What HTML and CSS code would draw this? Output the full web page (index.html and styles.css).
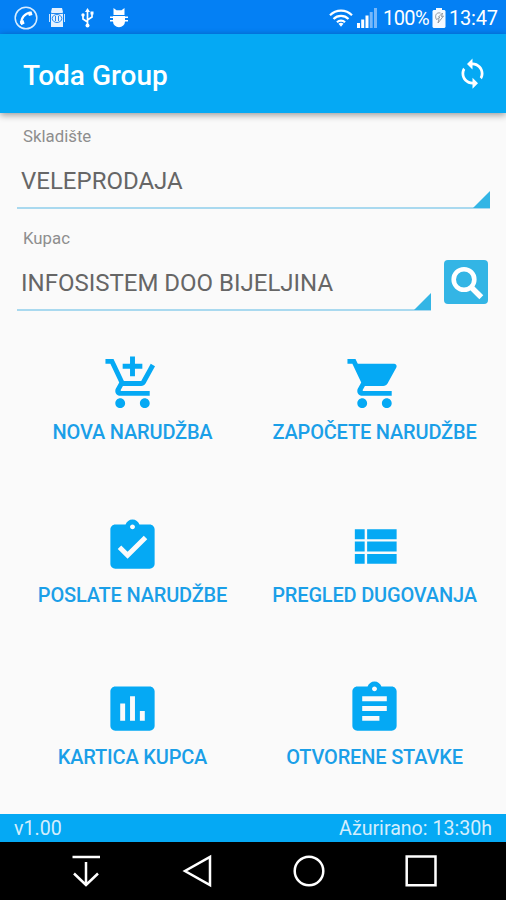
FILE: index.html
```html
<!DOCTYPE html>
<html lang="bs">
<head>
    <meta charset="UTF-8">
    <meta name="viewport" content="width=device-width, initial-scale=1.0">
    <title>Toda Group</title>
    <link rel="stylesheet" href="styles.css">
</head>
<body>

    <!-- Status bar -->
    <div class="status-bar">
        <div class="status-left">
            <svg class="icon-call" width="24" height="24" viewBox="0 0 24 24">
                <circle cx="12" cy="12" r="10.8" fill="none" stroke="#d8ecff" stroke-width="1.5"/>
                <path d="M7.5 17.8C6.5 12 11 7.2 16.6 6.6" fill="none" stroke="#fff" stroke-width="2.2"/>
                <path d="M13.6 6l4-.6.9 3.7-3.6 1zM5.8 15.6l3.6-1.6 1.2 3.4-3.3 1.8z" fill="#fff"/>
            </svg>
            <svg class="icon-jar" width="16" height="22" viewBox="0 0 16 22">
                <path d="M3 1h10l1 4-1 2H3L2 5zM2 7h12v13H2z" fill="#e3f1ff"/>
                <path d="M.5 7v8M15.500 7v8" stroke="#cfe6ff" stroke-width="1"/>
                <ellipse cx="8" cy="11.500" rx="4.800" ry="4" fill="none" stroke="#2488ee" stroke-width="1"/>
                <path d="M6.500 9v5M9.500 9v5M3 6.500h10" stroke="#2488ee" stroke-width="1"/>
            </svg>
            <svg class="icon-usb" width="13" height="20" viewBox="0 0 13 20">
                <path d="M6.500 3v14M6.500 14L2 11V7.500M6.500 12L11 9V6" fill="none" stroke="#fff" stroke-width="1.700"/>
                <path d="M6.500 0l2.500 4H4zM9.500 3.500h3v3h-3z" fill="#fff"/>
                <circle cx="2" cy="7" r="1.700" fill="#fff"/>
                <circle cx="6.500" cy="17.500" r="2" fill="#fff"/>
            </svg>
            <svg class="icon-debug" width="18" height="20" viewBox="0 0 18 20">
                <path d="M3.500 7V0l3 2.200h5l3-2.200v7zM3 8h12v5.500a6 5.800 0 0 1-12 0z" fill="#fff"/>
                <path d="M0 9.200h18M0 12.800h18" stroke="#fff" stroke-width="1.400"/>
            </svg>
        </div>
        <div class="status-right">
            <svg class="icon-wifi" width="24" height="18" viewBox="0 0 24 18">
                <path d="M1 6.300a15.500 15.500 0 0 1 22 0M4.500 10a10.500 10.500 0 0 1 15 0M8 13.300a5.600 5.600 0 0 1 8 0" fill="none" stroke="#fff" stroke-width="2.200"/>
                <path d="M9.500 14.800a3.700 3.700 0 0 1 5 0L12 17.800z" fill="#fff"/>
            </svg>
            <svg class="icon-signal" width="20" height="20" viewBox="0 0 20 20">
                <path d="M0 15h3v5H0zM4.200 11.500h3V20h-3zM8.500 7.500h3V20h-3z" fill="#fff"/>
                <path d="M12.700 4h3v16h-3zM17 0h3v20h-3z" fill="#76b7fa"/>
            </svg>
            <span class="battery-text">100%</span>
            <svg class="icon-battery" width="14" height="20" viewBox="0 0 14 20">
                <path d="M4 0h6v2h2.500l1 1v16l-1 1h-11l-1-1V3l1-1H4z" fill="#f5faff"/>
                <path d="M8.500 5C4 4 2.500 8 4.500 11.500L8 9.500 6.500 9l4-4-1 3.500 2-.5-5.500 7 1-4" fill="none" stroke="#8a9096" stroke-width=".9"/>
            </svg>
            <span class="clock">13:47</span>
        </div>
    </div>

    <!-- App bar -->
    <header class="app-bar">
        <h1>Toda Group</h1>
        <svg class="icon-sync" width="33" height="33" viewBox="0 0 24 24" fill="#fff">
            <path d="M12 4V1L8 5l4 4V6c3.310 0 6 2.690 6 6 0 1.010-.25 1.970-.7 2.800l1.460 1.460C19.540 15.030 20 13.570 20 12c0-4.420-3.580-8-8-8zm0 14c-3.310 0-6-2.690-6-6 0-1.010.25-1.970.7-2.800L5.240 7.740C4.460 8.970 4 10.430 4 12c0 4.420 3.580 8 8 8v3l4-4-4-4v3z"/>
        </svg>
    </header>

    <main>
        <div class="form">
            <label class="field-label">Skladište</label>
            <div class="spinner">
                <span class="spinner-text">VELEPRODAJA</span>
                <span class="spinner-arrow"></span>
            </div>

            <label class="field-label">Kupac</label>
            <div class="customer-row">
                <div class="spinner">
                    <span class="spinner-text">INFOSISTEM DOO BIJELJINA</span>
                    <span class="spinner-arrow"></span>
                </div>
                <button class="search-btn" aria-label="Traži">
                    <svg width="44" height="44" viewBox="0 0 44 44" fill="none" stroke="#fff">
                        <circle cx="20" cy="19.500" r="10.300" stroke-width="4.600"/>
                        <path d="M27.500 27.500L37.300 37.300" stroke-width="5.500"/>
                    </svg>
                </button>
            </div>
        </div>

        <!-- Main menu -->
        <div class="menu">
            <div class="menu-item">
                <svg class="menu-icon" viewBox="0 0 24 24">
                    <path d="M11 9h2V6h3V4h-3V1h-2v3H8v2h3v3zm-4 9c-1.100 0-1.990.9-1.990 2S5.900 22 7 22s2-.9 2-2-.9-2-2-2zm10 0c-1.100 0-1.990.9-1.990 2s.89 2 1.990 2 2-.9 2-2-.9-2-2-2zm-9.830-3.250l.03-.12.900-1.630h7.450c.75 0 1.410-.41 1.750-1.030l3.860-7.010L19.420 4h-.01l-1.100 2-2.760 5H8.530l-.13-.27L6.160 6l-.95-2-.94-2H1v2h2l3.600 7.590-1.350 2.450c-.16.280-.25.610-.25.960 0 1.100.9 2 2 2h12v-2H7.420c-.13 0-.25-.11-.25-.25z"/>
                </svg>
                <span class="menu-text">NOVA NARUDŽBA</span>
            </div>
            <div class="menu-item">
                <svg class="menu-icon" viewBox="0 0 24 24">
                    <path d="M7 18c-1.100 0-1.990.9-1.990 2S5.900 22 7 22s2-.9 2-2-.9-2-2-2zM1 2v2h2l3.600 7.590-1.350 2.450c-.16.280-.25.610-.25.960 0 1.100.9 2 2 2h12v-2H7.420c-.14 0-.25-.11-.25-.25l.03-.12.900-1.630h7.450c.75 0 1.410-.41 1.750-1.030l3.580-6.490c.08-.14.120-.31.120-.48 0-.55-.45-1-1-1H5.210l-.94-2H1zm16 16c-1.100 0-1.990.9-1.990 2s.89 2 1.990 2 2-.9 2-2-.9-2-2-2z"/>
                </svg>
                <span class="menu-text">ZAPOČETE NARUDŽBE</span>
            </div>
            <div class="menu-item">
                <svg class="menu-icon" viewBox="0 0 24 24">
                    <path d="M19 3h-4.180C14.400 1.840 13.300 1 12 1c-1.300 0-2.400.84-2.820 2H5c-1.100 0-2 .9-2 2v14c0 1.100.9 2 2 2h14c1.100 0 2-.9 2-2V5c0-1.100-.9-2-2-2zm-7 0c.55 0 1 .45 1 1s-.45 1-1 1-1-.45-1-1 .45-1 1-1zm-2 14l-4-4 1.410-1.410L10 14.170l6.590-6.590L18 9l-8 8z"/>
                </svg>
                <span class="menu-text">POSLATE NARUDŽBE</span>
            </div>
            <div class="menu-item">
                <svg class="menu-icon" viewBox="0 0 24 24">
                    <path d="M4 14h4v-4H4v4zm0 5h4v-4H4v4zM4 9h4V5H4v4zm5 5h12v-4H9v4zm0 5h12v-4H9v4zM9 5v4h12V5H9z"/>
                </svg>
                <span class="menu-text">PREGLED DUGOVANJA</span>
            </div>
            <div class="menu-item">
                <svg class="menu-icon" viewBox="0 0 24 24">
                    <path d="M19 3H5c-1.100 0-2 .9-2 2v14c0 1.100.9 2 2 2h14c1.100 0 2-.9 2-2V5c0-1.100-.9-2-2-2zM9 17H7v-7h2v7zm4 0h-2V7h2v10zm4 0h-2v-4h2v4z"/>
                </svg>
                <span class="menu-text">KARTICA KUPCA</span>
            </div>
            <div class="menu-item">
                <svg class="menu-icon" viewBox="0 0 24 24">
                    <path d="M19 3h-4.180C14.400 1.840 13.300 1 12 1c-1.300 0-2.400.84-2.820 2H5c-1.100 0-2 .9-2 2v14c0 1.100.9 2 2 2h14c1.100 0 2-.9 2-2V5c0-1.100-.9-2-2-2zm-7 0c.55 0 1 .45 1 1s-.45 1-1 1-1-.45-1-1 .45-1 1-1zm2 14H7v-2h7v2zm3-4H7v-2h10v2zm0-4H7V7h10v2z"/>
                </svg>
                <span class="menu-text">OTVORENE STAVKE</span>
            </div>
        </div>
    </main>

    <footer class="info-bar">
        <span>v1.00</span>
        <span>Ažurirano: 13:30h</span>
    </footer>

    <!-- Navigation bar -->
    <nav class="nav-bar">
        <svg width="32" height="34" viewBox="0 0 32 34">
            <path d="M2.500 3h27.500M16 8v23M4 19.500l12 11.500 12-11.500"/>
        </svg>
        <svg width="32" height="34" viewBox="0 0 32 34">
            <path d="M28 3v28L3 17z"/>
        </svg>
        <svg width="32" height="34" viewBox="0 0 32 34">
            <circle cx="16" cy="17" r="14.300"/>
        </svg>
        <svg width="32" height="34" viewBox="0 0 32 34">
            <path d="M1.700 2.500h28.800v28.800H1.700z"/>
        </svg>
    </nav>

</body>
</html>
```

FILE: styles.css
```css
* {
    box-sizing: border-box;
}
body {
    font-family: Roboto, "Liberation Sans", sans-serif;
    background-color: #fafafa;
    margin: 0;
    height: 900px;
    display: flex;
    flex-direction: column;
    overflow: hidden;
}
svg {
    display: block;
    flex-shrink: 0;
}

.status-bar {
    flex-shrink: 0;
    height: 34px;
    background-color: #0480f4;
    color: #fff;
    display: flex;
    justify-content: space-between;
    align-items: center;
    padding: 2px 9px 0 14px;
    font-size: 20px;
    line-height: 24px;
}
.status-left, .status-right {
    display: flex;
    align-items: center;
}
.icon-jar {
    margin-left: 11px;
}
.icon-usb {
    margin-left: 16px;
}
.icon-debug {
    margin-left: 16px;
}
.icon-signal {
    margin-left: 4px;
}
.battery-text {
    margin-left: 6px;
    width: 44px;
    letter-spacing: -0.6px;
}
.icon-battery {
    margin-left: 5px;
}
.clock {
    margin-left: 3px;
    width: 48px;
    letter-spacing: -0.2px;
}

.app-bar {
    flex-shrink: 0;
    height: 79px;
    background-color: #05a9f4;
    box-shadow: 0 2px 7px rgba(0, 0, 0, 0.4);
    display: flex;
    justify-content: space-between;
    align-items: center;
    padding: 0 17px 0 23px;
}
h1 {
    margin: 4px 0 0;
    color: #fff;
    font-size: 28px;
    font-weight: 500;
    line-height: 34px;
}

main {
    flex: 1;
    min-height: 0;
}
.form {
    padding: 13px 16px 0 17px;
}
.field-label {
    display: block;
    height: 20px;
    padding-left: 6px;
    color: #8e8e8e;
    font-size: 16.8px;
    line-height: 20px;
}
.spinner {
    flex: 1;
    height: 63px;
    border-bottom: 2px solid #a9d9ef;
    position: relative;
    padding: 19px 0 0 4px;
}
.form > .spinner {
    margin-bottom: 19px;
}
.spinner-text {
    display: block;
    color: #666;
    font-size: 24px;
    line-height: 32px;
    white-space: nowrap;
}
.spinner-arrow {
    position: absolute;
    right: 0;
    bottom: -1px;
    width: 17px;
    height: 17px;
    background-color: #33b5e5;
    clip-path: polygon(100% 0, 100% 100%, 0 100%);
}
.customer-row {
    display: flex;
    align-items: flex-start;
    gap: 13px;
    padding-right: 2px;
}
.search-btn {
    margin-top: 12px;
    width: 44px;
    height: 44px;
    padding: 0;
    border: none;
    border-radius: 4px;
    background-color: #33b5e5;
}

.menu {
    display: grid;
    grid-template-columns: 242px 242px;
    grid-auto-rows: 162.5px;
    padding: 43px 0 0 11.5px;
}
.menu-item {
    display: flex;
    flex-direction: column;
    align-items: center;
}
.menu-icon {
    width: 59px;
    height: 59px;
    fill: #05a9f4;
}
.menu-text {
    margin-top: 7px;
    color: #1a9fe8;
    font-size: 20px;
    font-weight: 500;
    letter-spacing: -0.18px;
    line-height: 24px;
    white-space: nowrap;
}

.info-bar {
    flex-shrink: 0;
    height: 28px;
    background-color: #05a9f4;
    color: #d4eefc;
    display: flex;
    justify-content: space-between;
    align-items: center;
    padding: 1px 14px 0;
    font-size: 19.6px;
    line-height: 24px;
}

.nav-bar {
    flex-shrink: 0;
    height: 58px;
    background-color: #000;
    display: flex;
    justify-content: space-between;
    align-items: center;
    padding: 0 69px 0 70px;
}
.nav-bar svg {
    fill: none;
    stroke: #fff;
    stroke-width: 2.5px;
}
```
